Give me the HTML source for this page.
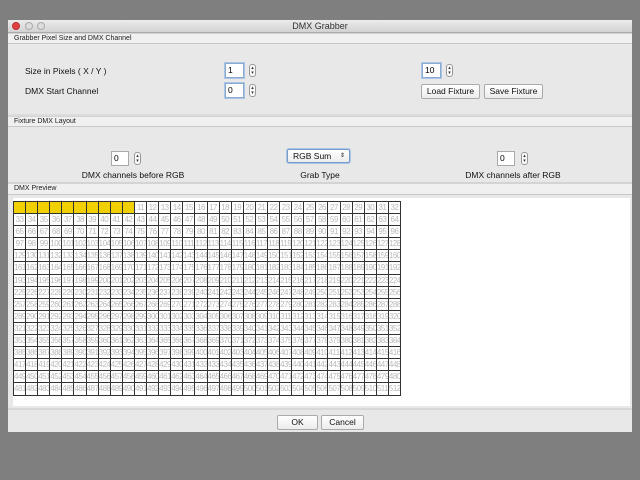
<!DOCTYPE html>
<html><head><meta charset="utf-8"><style>
*{margin:0;padding:0;box-sizing:border-box}
body{width:640px;height:480px;background:#7f7f7f;font-family:"Liberation Sans",sans-serif;position:relative;overflow:hidden}
.a{position:absolute}
.win{left:8px;top:20px;width:624px;height:412px;background:#e8e8e8}
.tb{left:8px;top:20px;width:624px;height:13px;background:linear-gradient(#ececec,#d2d2d2);border-bottom:1px solid #aaa;font-size:9px;text-align:center;line-height:13px;color:#333}
.dot{width:8px;height:8px;border-radius:50%;top:22px;border:1px solid #aaa;background:#ddd}
.hd{left:8px;width:624px;height:11px;background:#f0f0f0;border-bottom:1px solid #c8c8c8;border-top:1px solid #d4d4d4;font-size:7px;line-height:10px;padding-left:6px;color:#222}
.lb{font-size:8.5px;color:#111}
.in{background:#fff;border:1px solid #8aaad0;box-shadow:0 0 0 1px #a9c4e6;font-size:8.5px;line-height:13px;padding-left:2px;height:15px}
.st{width:7px;height:13px;border:1px solid #999;border-radius:3px;background:#fafafa;font-size:5px;line-height:5px;text-align:center;color:#333;padding-top:1px}
.bt{background:linear-gradient(#fff,#ececec);border:1px solid #aaa;border-radius:2px;font-size:8.5px;text-align:center;line-height:13px;height:15px;color:#111}
.g{left:13px;top:201px;display:grid;grid-template-columns:repeat(32,12.1px);grid-auto-rows:12.1px;border-left:1px solid #333;border-top:1px solid #333}
.g b{font-weight:normal;font-size:8px;color:#bbb;border-right:1px solid #333;border-bottom:1px solid #333;overflow:hidden;text-align:center;line-height:11px;white-space:nowrap;letter-spacing:-0.5px}
.g b.y{background:#f0d000;color:#f0d000}
</style></head><body>
<div class="a win"></div>
<div class="a tb">DMX Grabber</div>
<div class="a dot" style="left:12px;background:#e04040;border-color:#b33"></div>
<div class="a dot" style="left:25px"></div>
<div class="a dot" style="left:37px"></div>
<div class="a hd" style="top:33px">Grabber Pixel Size and DMX Channel</div>
<div class="a lb" style="left:25px;top:66px">Size in Pixels ( X / Y )</div>
<div class="a lb" style="left:25px;top:86px">DMX Start Channel</div>
<div class="a in" style="left:225px;top:63px;width:19px">1</div>
<div class="a st" style="left:249px;top:64px">▴<br>▾</div>
<div class="a in" style="left:225px;top:83px;width:19px">0</div>
<div class="a st" style="left:249px;top:84px">▴<br>▾</div>
<div class="a in" style="left:422px;top:63px;width:19px">10</div>
<div class="a st" style="left:446px;top:64px">▴<br>▾</div>
<div class="a bt" style="left:421px;top:84px;width:59px">Load Fixture</div>
<div class="a bt" style="left:484px;top:84px;width:59px">Save Fixture</div>
<div class="a" style="left:8px;top:114px;width:624px;height:2px;background:#dcdcdc"></div>
<div class="a hd" style="top:116px">Fixture DMX Layout</div>
<div class="a in" style="left:111px;top:151px;width:18px;box-shadow:none;border-color:#aaa">0</div>
<div class="a st" style="left:134px;top:152px">▴<br>▾</div>
<div class="a lb" style="left:53px;top:170px;width:160px;text-align:center">DMX channels before RGB</div>
<div class="a bt" style="left:287px;top:149px;width:63px;text-align:left;padding-left:5px;border-color:#7a9cc8;box-shadow:0 0 0 1px #a9c4e6;height:14px;line-height:12px">RGB Sum<span style="position:absolute;right:4px;font-size:6px">⇕</span></div>
<div class="a lb" style="left:270px;top:170px;width:100px;text-align:center">Grab Type</div>
<div class="a in" style="left:497px;top:151px;width:18px;box-shadow:none;border-color:#aaa">0</div>
<div class="a st" style="left:521px;top:152px">▴<br>▾</div>
<div class="a lb" style="left:433px;top:170px;width:160px;text-align:center">DMX channels after RGB</div>
<div class="a" style="left:8px;top:182px;width:624px;height:2px;background:#d4d4d4"></div>
<div class="a hd" style="top:184px;border-top:none">DMX Preview</div>
<div class="a" style="left:13px;top:198px;width:617px;height:208px;background:#fff"></div>
<div class="a g">
<b class="y">1</b><b class="y">2</b><b class="y">3</b><b class="y">4</b><b class="y">5</b><b class="y">6</b><b class="y">7</b><b class="y">8</b><b class="y">9</b><b class="y">10</b><b>11</b><b>12</b><b>13</b><b>14</b><b>15</b><b>16</b><b>17</b><b>18</b><b>19</b><b>20</b><b>21</b><b>22</b><b>23</b><b>24</b><b>25</b><b>26</b><b>27</b><b>28</b><b>29</b><b>30</b><b>31</b><b>32</b>
<b>33</b><b>34</b><b>35</b><b>36</b><b>37</b><b>38</b><b>39</b><b>40</b><b>41</b><b>42</b><b>43</b><b>44</b><b>45</b><b>46</b><b>47</b><b>48</b><b>49</b><b>50</b><b>51</b><b>52</b><b>53</b><b>54</b><b>55</b><b>56</b><b>57</b><b>58</b><b>59</b><b>60</b><b>61</b><b>62</b><b>63</b><b>64</b>
<b>65</b><b>66</b><b>67</b><b>68</b><b>69</b><b>70</b><b>71</b><b>72</b><b>73</b><b>74</b><b>75</b><b>76</b><b>77</b><b>78</b><b>79</b><b>80</b><b>81</b><b>82</b><b>83</b><b>84</b><b>85</b><b>86</b><b>87</b><b>88</b><b>89</b><b>90</b><b>91</b><b>92</b><b>93</b><b>94</b><b>95</b><b>96</b>
<b>97</b><b>98</b><b>99</b><b>100</b><b>101</b><b>102</b><b>103</b><b>104</b><b>105</b><b>106</b><b>107</b><b>108</b><b>109</b><b>110</b><b>111</b><b>112</b><b>113</b><b>114</b><b>115</b><b>116</b><b>117</b><b>118</b><b>119</b><b>120</b><b>121</b><b>122</b><b>123</b><b>124</b><b>125</b><b>126</b><b>127</b><b>128</b>
<b>129</b><b>130</b><b>131</b><b>132</b><b>133</b><b>134</b><b>135</b><b>136</b><b>137</b><b>138</b><b>139</b><b>140</b><b>141</b><b>142</b><b>143</b><b>144</b><b>145</b><b>146</b><b>147</b><b>148</b><b>149</b><b>150</b><b>151</b><b>152</b><b>153</b><b>154</b><b>155</b><b>156</b><b>157</b><b>158</b><b>159</b><b>160</b>
<b>161</b><b>162</b><b>163</b><b>164</b><b>165</b><b>166</b><b>167</b><b>168</b><b>169</b><b>170</b><b>171</b><b>172</b><b>173</b><b>174</b><b>175</b><b>176</b><b>177</b><b>178</b><b>179</b><b>180</b><b>181</b><b>182</b><b>183</b><b>184</b><b>185</b><b>186</b><b>187</b><b>188</b><b>189</b><b>190</b><b>191</b><b>192</b>
<b>193</b><b>194</b><b>195</b><b>196</b><b>197</b><b>198</b><b>199</b><b>200</b><b>201</b><b>202</b><b>203</b><b>204</b><b>205</b><b>206</b><b>207</b><b>208</b><b>209</b><b>210</b><b>211</b><b>212</b><b>213</b><b>214</b><b>215</b><b>216</b><b>217</b><b>218</b><b>219</b><b>220</b><b>221</b><b>222</b><b>223</b><b>224</b>
<b>225</b><b>226</b><b>227</b><b>228</b><b>229</b><b>230</b><b>231</b><b>232</b><b>233</b><b>234</b><b>235</b><b>236</b><b>237</b><b>238</b><b>239</b><b>240</b><b>241</b><b>242</b><b>243</b><b>244</b><b>245</b><b>246</b><b>247</b><b>248</b><b>249</b><b>250</b><b>251</b><b>252</b><b>253</b><b>254</b><b>255</b><b>256</b>
<b>257</b><b>258</b><b>259</b><b>260</b><b>261</b><b>262</b><b>263</b><b>264</b><b>265</b><b>266</b><b>267</b><b>268</b><b>269</b><b>270</b><b>271</b><b>272</b><b>273</b><b>274</b><b>275</b><b>276</b><b>277</b><b>278</b><b>279</b><b>280</b><b>281</b><b>282</b><b>283</b><b>284</b><b>285</b><b>286</b><b>287</b><b>288</b>
<b>289</b><b>290</b><b>291</b><b>292</b><b>293</b><b>294</b><b>295</b><b>296</b><b>297</b><b>298</b><b>299</b><b>300</b><b>301</b><b>302</b><b>303</b><b>304</b><b>305</b><b>306</b><b>307</b><b>308</b><b>309</b><b>310</b><b>311</b><b>312</b><b>313</b><b>314</b><b>315</b><b>316</b><b>317</b><b>318</b><b>319</b><b>320</b>
<b>321</b><b>322</b><b>323</b><b>324</b><b>325</b><b>326</b><b>327</b><b>328</b><b>329</b><b>330</b><b>331</b><b>332</b><b>333</b><b>334</b><b>335</b><b>336</b><b>337</b><b>338</b><b>339</b><b>340</b><b>341</b><b>342</b><b>343</b><b>344</b><b>345</b><b>346</b><b>347</b><b>348</b><b>349</b><b>350</b><b>351</b><b>352</b>
<b>353</b><b>354</b><b>355</b><b>356</b><b>357</b><b>358</b><b>359</b><b>360</b><b>361</b><b>362</b><b>363</b><b>364</b><b>365</b><b>366</b><b>367</b><b>368</b><b>369</b><b>370</b><b>371</b><b>372</b><b>373</b><b>374</b><b>375</b><b>376</b><b>377</b><b>378</b><b>379</b><b>380</b><b>381</b><b>382</b><b>383</b><b>384</b>
<b>385</b><b>386</b><b>387</b><b>388</b><b>389</b><b>390</b><b>391</b><b>392</b><b>393</b><b>394</b><b>395</b><b>396</b><b>397</b><b>398</b><b>399</b><b>400</b><b>401</b><b>402</b><b>403</b><b>404</b><b>405</b><b>406</b><b>407</b><b>408</b><b>409</b><b>410</b><b>411</b><b>412</b><b>413</b><b>414</b><b>415</b><b>416</b>
<b>417</b><b>418</b><b>419</b><b>420</b><b>421</b><b>422</b><b>423</b><b>424</b><b>425</b><b>426</b><b>427</b><b>428</b><b>429</b><b>430</b><b>431</b><b>432</b><b>433</b><b>434</b><b>435</b><b>436</b><b>437</b><b>438</b><b>439</b><b>440</b><b>441</b><b>442</b><b>443</b><b>444</b><b>445</b><b>446</b><b>447</b><b>448</b>
<b>449</b><b>450</b><b>451</b><b>452</b><b>453</b><b>454</b><b>455</b><b>456</b><b>457</b><b>458</b><b>459</b><b>460</b><b>461</b><b>462</b><b>463</b><b>464</b><b>465</b><b>466</b><b>467</b><b>468</b><b>469</b><b>470</b><b>471</b><b>472</b><b>473</b><b>474</b><b>475</b><b>476</b><b>477</b><b>478</b><b>479</b><b>480</b>
<b>481</b><b>482</b><b>483</b><b>484</b><b>485</b><b>486</b><b>487</b><b>488</b><b>489</b><b>490</b><b>491</b><b>492</b><b>493</b><b>494</b><b>495</b><b>496</b><b>497</b><b>498</b><b>499</b><b>500</b><b>501</b><b>502</b><b>503</b><b>504</b><b>505</b><b>506</b><b>507</b><b>508</b><b>509</b><b>510</b><b>511</b><b>512</b>
</div>
<div class="a" style="left:8px;top:408px;width:624px;height:2px;background:#d8d8d8"></div>
<div class="a bt" style="left:277px;top:415px;width:41px">OK</div>
<div class="a bt" style="left:321px;top:415px;width:43px">Cancel</div>
</body></html>
